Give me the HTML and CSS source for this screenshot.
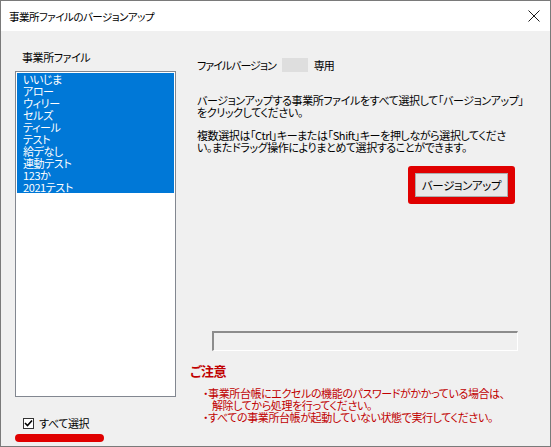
FILE: index.html
```html
<!DOCTYPE html>
<html lang="ja">
<head>
    <meta charset="UTF-8">
    <title>事業所ファイルのバージョンアップ</title>
    <link rel="stylesheet" href="styles.css">
</head>
<body>

<div class="window">
    <div class="titlebar">
        <span class="title">事業所ファイルのバージョンアップ</span>
        <svg class="close" width="12" height="12" viewBox="0 0 12 12">
            <path d="M0.5 0.5 L11.5 11.5 M11.5 0.5 L0.5 11.5" stroke="#1a1a1a" stroke-width="1" fill="none"/>
        </svg>
    </div>

    <div class="content">
        <div class="left">
            <div class="label">事業所ファイル</div>
            <ul class="filelist">
                <li>いいじま</li>
                <li>アロー</li>
                <li>ウィリー</li>
                <li>セルズ</li>
                <li>ティール</li>
                <li>テスト</li>
                <li>給デなし</li>
                <li>連動テスト</li>
                <li>123か</li>
                <li>2021テスト</li>
            </ul>
            <label class="check">
                <span class="checkbox">
                    <svg width="9" height="9" viewBox="0 0 9 9">
                        <path d="M1 4 L3.5 6.5 L8 1.5" stroke="#000" stroke-width="1.6" fill="none"/>
                    </svg>
                </span>
                すべて選択
            </label>
            <div class="underline"></div>
        </div>

        <div class="right">
            <div class="version"><span>ファイルバージョン</span><span class="ver-box"></span><span>専用</span></div>
            <p class="msg">バージョンアップする事業所ファイルをすべて選択して「バージョンアップ」<br>をクリックしてください。</p>
            <p class="msg">複数選択は「Ctrl」キーまたは「Shift」キーを押しながら選択してくださ<br>い。またドラッグ操作によりまとめて選択することができます。</p>
            <div class="btn-row">
                <div class="highlight">
                    <button class="btn">バージョンアップ</button>
                </div>
            </div>
            <div class="spacer"></div>
            <div class="progress"></div>
            <div class="notice">
                <div class="notice-title">ご注意</div>
                <div class="note">・事業所台帳にエクセルの機能のパスワードがかかっている場合は、</div>
                <div class="note indent">解除してから処理を行ってください。</div>
                <div class="note">・すべての事業所台帳が起動していない状態で実行してください。</div>
            </div>
        </div>
    </div>
</div>

</body>
</html>
```

FILE: styles.css
```css
body {
    margin: 0;
    font-family: "Noto Sans CJK JP", "Noto Sans", sans-serif;
    font-size: 11px;
    letter-spacing: -0.4px;
    font-feature-settings: "palt";
    color: #000;
}

.window {
    width: 551px;
    height: 447px;
    box-sizing: border-box;
    border: 1px solid #7a7a7a;
    background-color: #f0f0f0;
    display: flex;
    flex-direction: column;
}

.titlebar {
    height: 30px;
    background-color: #fff;
    display: flex;
    align-items: center;
    justify-content: space-between;
    padding: 0 10px 0 8px;
}

.title {
    font-size: 10.5px;
    letter-spacing: -0.5px;
    color: #000;
}

.content {
    flex: 1;
    display: flex;
}

.left {
    width: 175px;
    flex-shrink: 0;
    padding-left: 14px;
    box-sizing: border-box;
    display: flex;
    flex-direction: column;
}

.label {
    margin: 20px 0 0 7px;
    line-height: 12px;
    height: 20px;
}

.filelist {
    list-style: none;
    margin: 0;
    padding: 1px;
    height: 326px;
    box-sizing: border-box;
    background-color: #fff;
    border: 1px solid #828790;
}

.filelist li {
    background-color: #0078d7;
    color: #fff;
    line-height: 12px;
    height: 12px;
    padding-left: 6px;
}

.check {
    display: flex;
    align-items: center;
    gap: 5px;
    margin: 20px 0 0 8px;
    line-height: 12px;
}

.checkbox {
    width: 11px;
    height: 11px;
    box-sizing: border-box;
    border: 1px solid #333;
    background-color: #fff;
    display: flex;
    align-items: center;
    justify-content: center;
}

.underline {
    width: 89px;
    height: 8px;
    margin: 5px 0 0 0;
    border-radius: 4px;
    background-color: #e00000;
}

.right {
    flex: 1;
    min-width: 0;
    padding-left: 14px;
    display: flex;
    flex-direction: column;
}

.version {
    margin: 27px 0 0 7px;
    line-height: 14px;
    letter-spacing: -1px;
    display: flex;
    align-items: center;
    gap: 6px;
}

.ver-box {
    width: 26px;
    height: 14px;
    background-color: #dedede;
}

.msg {
    margin: 22px 0 0 7px;
    line-height: 12px;
    white-space: nowrap;
}

.msg + .msg {
    margin-top: 11px;
}

.btn-row {
    display: flex;
    margin: 13px 0 0 218px;
}

.highlight {
    border: 7px solid #e00000;
    border-radius: 3px;
}

.btn {
    width: 93px;
    height: 24px;
    margin: 0;
    padding: 0;
    border: 1px solid #adadad;
    background-color: #e8e8e8;
    font-family: inherit;
    font-size: 11.5px;
    letter-spacing: -0.4px;
    font-feature-settings: "palt";
    color: #000;
}

.spacer {
    flex: 1;
}

.progress {
    width: 306px;
    height: 20px;
    box-sizing: border-box;
    margin-left: 22px;
    border-top: 2px solid #8c8c8c;
    border-left: 2px solid #8c8c8c;
    border-right: 1px solid #fff;
    border-bottom: 1px solid #fff;
    background-color: #f0f0f0;
}

.notice {
    color: #c00000;
    margin: 12px 0 23px 0;
}

.notice-title {
    font-weight: bold;
    font-size: 13px;
    line-height: 16px;
    margin-bottom: 8px;
}

.note {
    line-height: 12px;
    margin-left: 13px;
    white-space: nowrap;
}

.note.indent {
    margin-left: 22px;
}
```
